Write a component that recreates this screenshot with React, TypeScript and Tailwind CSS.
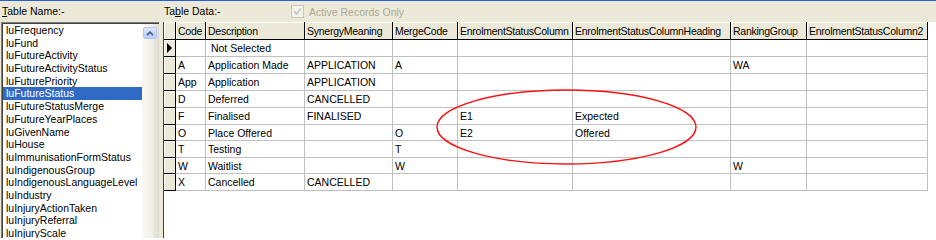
import React from 'react';

const tables = [
  'luFrequency',
  'luFund',
  'luFutureActivity',
  'luFutureActivityStatus',
  'luFuturePriority',
  'luFutureStatus',
  'luFutureStatusMerge',
  'luFutureYearPlaces',
  'luGivenName',
  'luHouse',
  'luImmunisationFormStatus',
  'luIndigenousGroup',
  'luIndigenousLanguageLevel',
  'luIndustry',
  'luInjuryActionTaken',
  'luInjuryReferral',
  'luInjuryScale',
];

const columns = [
  { title: 'Code', width: 'w-[30px]' },
  { title: 'Description', width: 'w-[99px]' },
  { title: 'SynergyMeaning', width: 'w-[88px]' },
  { title: 'MergeCode', width: 'w-[65px]' },
  { title: 'EnrolmentStatusColumn', width: 'w-[115px]' },
  { title: 'EnrolmentStatusColumnHeading', width: 'w-[158px]' },
  { title: 'RankingGroup', width: 'w-[76px]' },
  { title: 'EnrolmentStatusColumn2', width: 'w-[121px]' },
];

const rows = [
  { h: 'h-[17px]', cells: ['', '\u00a0Not Selected', '', '', '', '', '', ''] },
  { h: 'h-[17px]', cells: ['A', 'Application Made', 'APPLICATION', 'A', '', '', 'WA', ''] },
  { h: 'h-[17px]', cells: ['App', 'Application', 'APPLICATION', '', '', '', '', ''] },
  { h: 'h-[17px]', cells: ['D', 'Deferred', 'CANCELLED', '', '', '', '', ''] },
  { h: 'h-[17px]', cells: ['F', 'Finalised', 'FINALISED', '', 'E1', 'Expected', '', ''] },
  { h: 'h-[16px]', cells: ['O', 'Place Offered', '', 'O', 'E2', 'Offered', '', ''] },
  { h: 'h-[17px]', cells: ['T', 'Testing', '', 'T', '', '', '', ''] },
  { h: 'h-[16px]', cells: ['W', 'Waitlist', '', 'W', '', '', 'W', ''] },
  { h: 'h-[17px]', cells: ['X', 'Cancelled', 'CANCELLED', '', '', '', '', ''] },
];

function TableList() {
  return (
    <div className="ml-[1px] w-[158px] flex border-l border-t border-[#808080]">
      <div className="flex-1 flex border-l border-t border-[#404040] bg-white">
        <div className="w-[139px] overflow-hidden">
          {tables.map(name => (
            <div
              key={name}
              className={
                name === 'luFutureStatus'
                  ? 'h-[12.7px] leading-[12.7px] pl-[3px] whitespace-nowrap bg-[#316ac5] text-white'
                  : 'h-[12.7px] leading-[12.7px] pl-[3px] whitespace-nowrap text-black'
              }
            >
              {name}
            </div>
          ))}
        </div>
        <div className="w-[17px] bg-linear-to-r from-[#f9f8f4] via-[#f3f1ea] to-[#dedbce]">
          <div className="ml-[1px] mt-[3px] w-[14px] h-[12px] rounded-[2px] border border-[#b4c8f6] bg-linear-to-b from-[#dce7fd] to-[#b8ccf7] flex items-center justify-center">
            <svg width="8" height="5" viewBox="0 0 8 5">
              <path d="M1 4.2 L4 1.2 L7 4.2" fill="none" stroke="#4d6185" strokeWidth="1.8" />
            </svg>
          </div>
        </div>
      </div>
    </div>
  );
}

function DataGrid() {
  return (
    <div className="flex-1 border-l border-[#404040] bg-white">
      <div className="flex h-[18px]">
        <div className="w-[12px] shrink-0 bg-[#ece9d8] border-r border-b border-black shadow-[inset_1px_1px_0_#fff]" />
        {columns.map(col => (
          <div
            key={col.title}
            className={`${col.width} shrink-0 bg-[#ece9d8] border-r border-b border-black shadow-[inset_1px_1px_0_#fff] pl-[2px] leading-[19px] tracking-[-0.25px] whitespace-nowrap overflow-hidden text-black`}
          >
            {col.title}
          </div>
        ))}
      </div>
      {rows.map((row, i) => (
        <div key={i} className={`flex ${row.h}`}>
          <div className="w-[12px] shrink-0 bg-[#ece9d8] border-r border-b border-black shadow-[inset_1px_1px_0_#fff] flex items-center justify-center">
            {i === 0 && (
              <svg width="5" height="10" viewBox="0 0 5 10">
                <polygon points="0,0 5,5 0,10" fill="#000" />
              </svg>
            )}
          </div>
          {columns.map((col, j) => (
            <div
              key={col.title}
              className={`${col.width} shrink-0 border-r border-b border-[#c0c0c0] pl-[2px] leading-[16px] whitespace-nowrap overflow-hidden text-black`}
            >
              {row.cells[j]}
            </div>
          ))}
        </div>
      ))}
    </div>
  );
}

export default function App() {
  return (
    <div className="relative w-[936px] h-[238px] overflow-hidden bg-[#ece9d8] border-t border-[#2b5fd9] font-['Liberation_Sans',Arial,sans-serif] text-[10.5px]">
      <div className="flex h-[21px] leading-[20px] text-black">
        <div className="w-[164px] pl-[2px]">
          <span className="underline">T</span>able Name:-
        </div>
        <div className="w-[127px]">
          Ta<span className="underline">b</span>le Data:-
        </div>
        <div className="flex items-center gap-[5px]">
          <div className="w-[13px] h-[13px] border border-[#cac8bb] bg-[#f4f3ee] flex items-center justify-center">
            <svg width="9" height="9" viewBox="0 0 9 9">
              <path d="M1 4 L3.5 6.8 L8 1.5" fill="none" stroke="#cac8bb" strokeWidth="1.8" />
            </svg>
          </div>
          <span className="text-[#aca899]">Active Records Only</span>
        </div>
      </div>
      <div className="flex h-[216px] gap-[4px]">
        <TableList />
        <DataGrid />
      </div>
      <svg className="absolute left-0 top-0 pointer-events-none" width="936" height="238" viewBox="0 0 936 238">
        <ellipse cx="566.5" cy="126" rx="129.5" ry="37" fill="none" stroke="#ff1010" strokeWidth="1.4" />
      </svg>
    </div>
  );
}
